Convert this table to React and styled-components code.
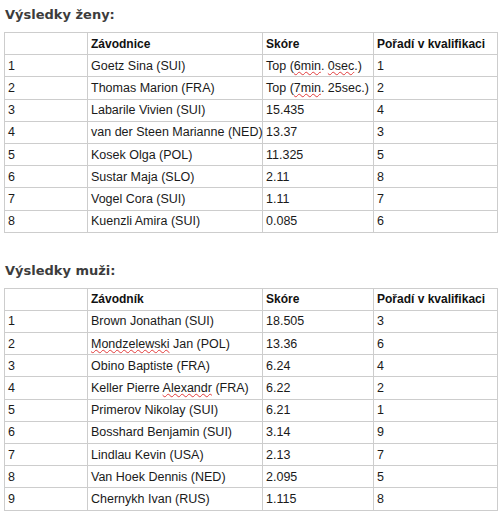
import React from "react";
import styled, { createGlobalStyle } from "styled-components";

const Global = createGlobalStyle`
  html, body { margin: 0; padding: 0; background: #fff; }
  body { font-family: "Liberation Sans", Arial, sans-serif; }
`;

const Page = styled.div`
  padding: 5px 3px 0 4px;
  display: flex;
  flex-direction: column;
`;

const Section = styled.section`
  display: flex;
  flex-direction: column;
  margin-bottom: ${(p) => p.$gap || 0}px;
`;

const Heading = styled.h3`
  margin: 0 0 8px 1px;
  font-family: "DejaVu Sans", Verdana, sans-serif;
  font-weight: bold;
  font-size: 13px;
  line-height: 19px;
  color: #3c3c3c;
`;

const Table = styled.table`
  width: 493px;
  border-collapse: collapse;
  table-layout: fixed;
  border: 1px solid #c4c4c4;
`;

const Cell = styled.td`
  border: 1px solid #cdcdcd;
  height: 21.2px;
  padding: 0 3px;
  font-size: 12.5px;
  line-height: 16px;
  color: #1a1a1a;
  white-space: nowrap;
  vertical-align: middle;
`;

const Head = styled(Cell).attrs({ as: "th" })`
  text-align: left;
  font-weight: bold;
  color: #111;
  font-size: 12px;
`;

const Spell = styled.span`
  text-decoration: underline wavy #e23b3b;
  text-decoration-thickness: 1px;
  text-underline-offset: 1px;
`;

const widths = [83, 175, 111, 124];

const women = [
  ["1", "Goetz Sina (SUI)", <>Top (<Spell>6min</Spell>. <Spell>0sec</Spell>.)</>, "1"],
  ["2", "Thomas Marion (FRA)", <>Top (<Spell>7min</Spell>. 25sec.)</>, "2"],
  ["3", "Labarile Vivien (SUI)", "15.435", "4"],
  ["4", "van der Steen Marianne (NED)", "13.37", "3"],
  ["5", "Kosek Olga (POL)", "11.325", "5"],
  ["6", "Sustar Maja (SLO)", "2.11", "8"],
  ["7", "Vogel Cora (SUI)", "1.11", "7"],
  ["8", "Kuenzli Amira (SUI)", "0.085", "6"],
];

const men = [
  ["1", "Brown Jonathan (SUI)", "18.505", "3"],
  ["2", <><Spell>Mondzelewski</Spell> Jan (POL)</>, "13.36", "6"],
  ["3", "Obino Baptiste (FRA)", "6.24", "4"],
  ["4", <>Keller Pierre <Spell>Alexandr</Spell> (FRA)</>, "6.22", "2"],
  ["5", "Primerov Nikolay (SUI)", "6.21", "1"],
  ["6", "Bosshard Benjamin (SUI)", "3.14", "9"],
  ["7", "Lindlau Kevin (USA)", "2.13", "7"],
  ["8", "Van Hoek Dennis (NED)", "2.095", "5"],
  ["9", "Chernykh Ivan (RUS)", "1.115", "8"],
];

function Results({ title, label, rows, gap }) {
  return (
    <Section $gap={gap}>
      <Heading>{title}</Heading>
      <Table>
        <colgroup>
          {widths.map((w, i) => (
            <col key={i} style={{ width: w }} />
          ))}
        </colgroup>
        <thead>
          <tr>
            <Head />
            <Head>{label}</Head>
            <Head>Skóre</Head>
            <Head>Pořadí v kvalifikaci</Head>
          </tr>
        </thead>
        <tbody>
          {rows.map((r, i) => (
            <tr key={i}>
              {r.map((c, j) => (
                <Cell key={j}>{c}</Cell>
              ))}
            </tr>
          ))}
        </tbody>
      </Table>
    </Section>
  );
}

export default function App() {
  return (
    <>
      <Global />
      <Page>
        <Results title="Výsledky ženy:" label="Závodnice" rows={women} gap={28} />
        <Results title="Výsledky muži:" label="Závodník" rows={men} gap={0} />
      </Page>
    </>
  );
}
